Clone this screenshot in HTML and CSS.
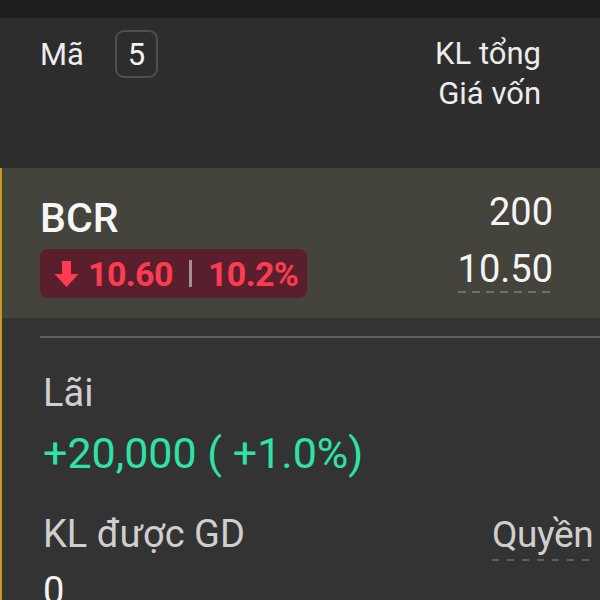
FILE: index.html
```html
<!DOCTYPE html>
<html lang="vi">
<head>
    <meta charset="UTF-8">
    <meta name="viewport" content="width=device-width, initial-scale=1.0">
    <title>Danh mục</title>
    <link rel="stylesheet" href="styles.css">
</head>
<body>

    <div class="topbar"></div>

    <!-- table header -->
    <div class="head">
        <div class="head-left">
            <span class="head-label">Mã</span>
            <span class="count">5</span>
        </div>
        <div class="head-right">
            <div>KL tổng</div>
            <div>Giá vốn</div>
        </div>
    </div>

    <div class="holding">
        <!-- selected row -->
        <div class="row">
            <div class="row-left">
                <div class="symbol">BCR</div>
                <div class="price-badge">
                    <svg class="arrow" width="25" height="28" viewBox="0 0 25 28">
                        <path d="M8 1h9v13h7.5L12.5 27 0.5 14H8z" fill="#ff3b52"/>
                    </svg>
                    <span>10.60</span>
                    <span class="sep"></span>
                    <span>10.2%</span>
                </div>
            </div>
            <div class="row-right">
                <div class="val">200</div>
                <div class="val val-cost"><span class="dashed">10.50</span></div>
            </div>
        </div>

        <div class="divider"></div>

        <!-- details -->
        <div class="details">
            <div class="label">Lãi</div>
            <div class="profit">+20,000 ( +1.0%)</div>

            <div class="grid">
                <div>
                    <div class="label">KL được GD</div>
                    <div class="value">0</div>
                </div>
                <div>
                    <div class="label"><span class="dashed dashed-light">Quyền</span></div>
                    <div class="value"></div>
                </div>
            </div>
        </div>
    </div>

</body>
</html>
```

FILE: styles.css
```css
body {
    margin: 0;
    background-color: #333333;
    font-family: Roboto, "Noto Sans", Arial, sans-serif;
    color: #f2f2f2;
    overflow: hidden;
}

.topbar {
    height: 18px;
    background-color: #1e1e1e;
}

/* header */
.head {
    height: 150px;
    box-sizing: border-box;
    background-color: #2d2d2d;
    display: flex;
    justify-content: space-between;
    align-items: flex-start;
    padding: 12px 59px 0 40px;
}

.head-left {
    display: flex;
    align-items: center;
}

.head-label {
    font-size: 31px;
    color: #ececec;
}

.count {
    margin-left: 31px;
    width: 43px;
    height: 48px;
    box-sizing: border-box;
    border: 2px solid #4f4f4f;
    border-radius: 9px;
    display: flex;
    align-items: center;
    justify-content: center;
    font-size: 31px;
    color: #f4f4f4;
}

.head-right {
    margin-top: 4px;
    text-align: right;
    font-size: 31px;
    line-height: 40px;
    color: #ececec;
}

/* holding block with the yellow marker */
.holding {
    border-left: 2px solid #c99a1e;
    height: 432px;
}

.row {
    height: 150px;
    box-sizing: border-box;
    background-color: #45443c;
    display: flex;
    justify-content: space-between;
    align-items: flex-start;
    padding: 18px 47px 0 38px;
}

.symbol {
    margin-top: 8px;
    font-size: 41px;
    font-weight: 500;
    line-height: 48px;
    color: #f6f6f6;
}

.price-badge {
    margin-top: 7px;
    height: 49px;
    width: 267px;
    box-sizing: border-box;
    background-color: #5a1f2c;
    border-radius: 8px;
    display: flex;
    align-items: center;
    padding-left: 14px;
    font-size: 34px;
    font-weight: bold;
    letter-spacing: -0.6px;
    color: #ff3b52;
}

.arrow {
    margin-right: 9px;
}

.sep {
    width: 3px;
    height: 27px;
    margin: 0 16px 0 16px;
    background-color: #a48f96;
}

.row-right {
    margin-top: 4px;
    text-align: right;
}

.val {
    font-size: 38px;
    line-height: 44px;
    color: #f4f4f4;
}

.val-cost {
    margin-top: 13px;
}

.dashed {
    display: inline-block;
    padding-bottom: 2px;
    background: repeating-linear-gradient(to right, #6f6f6c 0 8px, transparent 8px 14px) left bottom / 100% 2px no-repeat;
}

.divider {
    margin: 18px 0 0 38px;
    height: 2px;
    background-color: #5e5e5e;
}

.details {
    padding: 30px 0 0 41px;
}

.label {
    font-size: 38px;
    line-height: 50px;
    color: #cfcfcf;
}

.profit {
    margin-top: 7px;
    font-size: 43px;
    line-height: 56px;
    color: #2ee3a5;
}

.grid {
    margin-top: 28px;
    display: grid;
    grid-template-columns: 449px 1fr;
}

.dashed-light {
    font-size: 37px;
    letter-spacing: -0.4px;
    line-height: 44px;
    padding-bottom: 4px;
    background-image: repeating-linear-gradient(to right, #5f5f5f 0 7px, transparent 7px 15px);
}

.value {
    margin-top: 7px;
    font-size: 38px;
    line-height: 50px;
    color: #f4f4f4;
    white-space: nowrap;
}
```
